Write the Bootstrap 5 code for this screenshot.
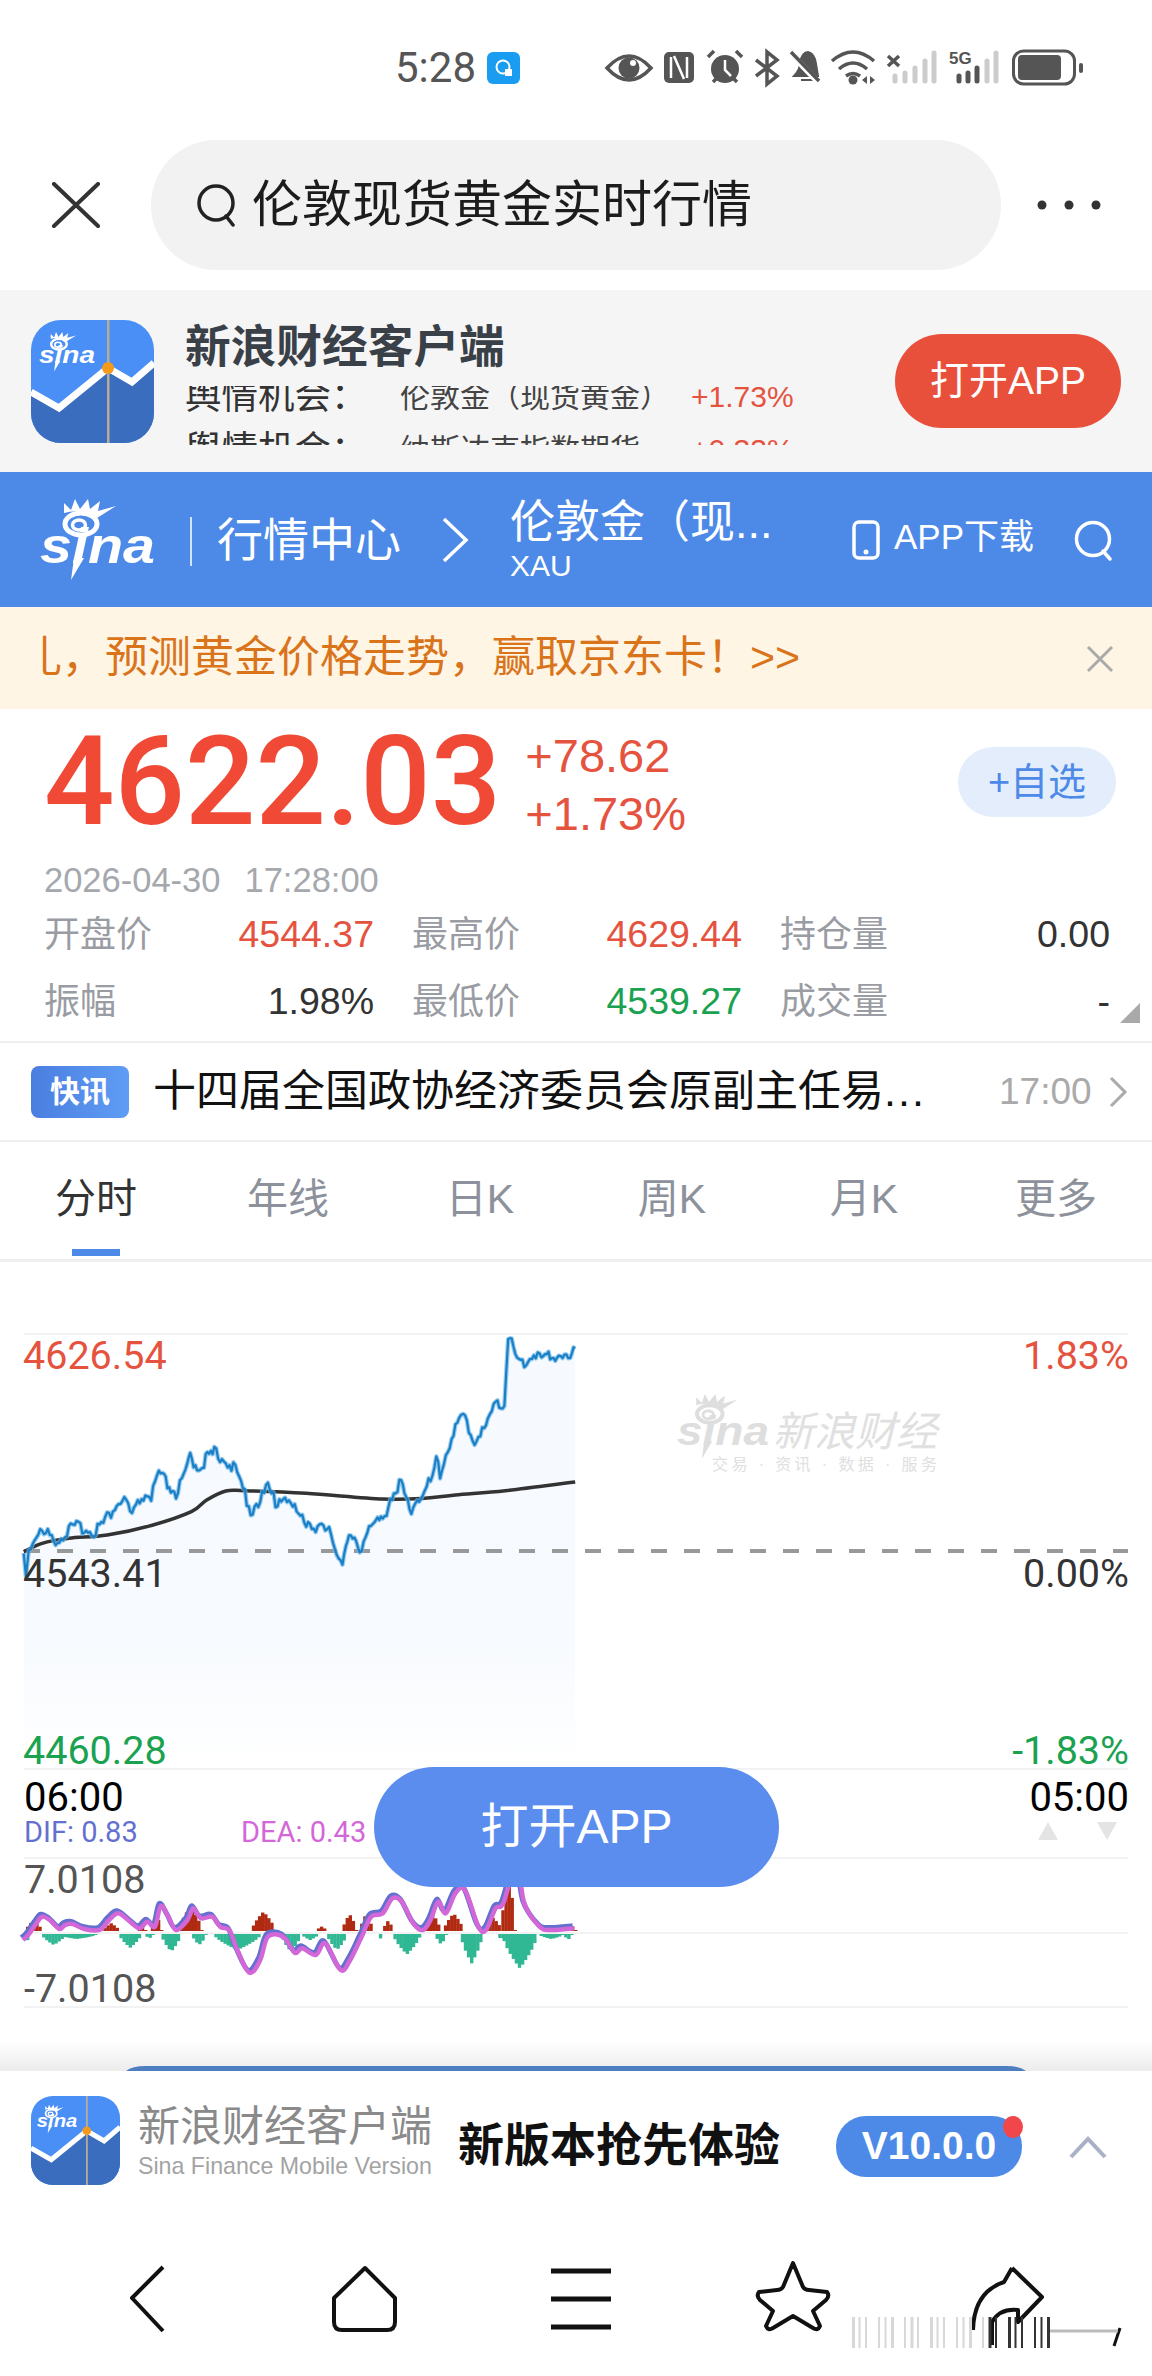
<!DOCTYPE html>
<html lang="zh">
<head>
<meta charset="UTF-8">
<title>伦敦金（现货黄金）</title>
<link href="https://cdn.jsdelivr.net/npm/bootstrap@5.3.0/dist/css/bootstrap.min.css" rel="stylesheet">
<style>
html, body { margin: 0; background: #fff; }
body { width: 1152px; height: 2376px; overflow: hidden; position: relative;
  font-family: "Liberation Sans", "Noto Sans CJK SC", sans-serif; color: #333; }
svg { display: block; }
.nowrap { white-space: nowrap; }

.status-bar { height: 110px; padding-left: 395px; position: relative; }
.status-time { font: 42px/1 Roboto, sans-serif; color: #555; margin-top: 47px; }
.status-app { width: 33px; height: 32px; border-radius: 6px; background: #1a9cf0; margin: 52px 0 0 11px; }
.status-icons { position: absolute; left: 600px; top: 45px; }

.browser-bar { height: 180px; padding: 30px 0 20px 0; }
.browser-close { width: 151px; }
.search-pill { width: 850px; height: 130px; border-radius: 65px; background: #f2f2f2; padding-left: 44px; }
.search-text { font-size: 50px; line-height: 1; color: #1c1c1c; margin-left: 13px; }
.browser-dots { width: 136px; }

.app-banner { height: 182px; background: #f5f5f5; padding-left: 31px; position: relative; }
.app-title { font-size: 45.7px; font-weight: 700; line-height: 1; color: #3a4047; position: absolute; left: 185px; top: 35px; }
.ticker-clip { position: absolute; left: 185px; top: 96px; width: 640px; height: 59px; overflow: hidden; }
.ticker-move { margin-top: -16px; }
.ticker-line { height: 53px; line-height: 53px; white-space: nowrap; display: flex; align-items: center; }
.ticker-tag { font-size: 36.5px; color: #333; width: 215px; }
.ticker-name { font-size: 30px; color: #444; width: 291px; }
.ticker-pct { font-size: 30px; color: #e5533f; }
.open-red { position: absolute; left: 895px; top: 44px; width: 226px; height: 94px; border-radius: 47px;
  background: #e9503c; color: #fff; font-size: 39px; }

.site-header { height: 135px; background: #4d8ae8; color: #fff; position: relative; }
.head-sep { position: absolute; left: 190px; top: 45px; width: 2px; height: 49px; background: rgba(255,255,255,.75); }
.head-title { position: absolute; left: 217px; top: 45px; font-size: 46px; line-height: 1; }
.head-name { position: absolute; left: 510px; top: 28px; font-size: 45px; line-height: 1; white-space: nowrap; }
.head-code { position: absolute; left: 510px; top: 79px; font-size: 30px; line-height: 1; }
.head-down { position: absolute; left: 894px; top: 47px; font-size: 35px; line-height: 1; white-space: nowrap; }

.notice { height: 102px; background: #fef5e5; position: relative; }
.notice-clip { position: absolute; left: 40px; top: 0; width: 900px; height: 102px; overflow: hidden; }
.notice-text { margin-left: -21px; font-size: 43px; line-height: 100px; color: #d9741a; white-space: nowrap; }

.quote { height: 334px; border-bottom: 2px solid #efefef; position: relative; padding: 11px 44px 0 44px; }
.price-row { height: 124px; }
.price-main { font: 500 124px/124px Roboto, sans-serif; color: #f04a36; }
.price-delta { margin-left: 24px; font-size: 47px; line-height: 58px; color: #e5533f; padding-top: 6px; }
.fav-pill { margin-left: auto; margin-right: -8px; width: 158px; height: 70px; border-radius: 35px; background: #e3edfb; color: #4d8ae8; font-size: 38px; }
.quote-time { height: 40px; margin-top: 16px; font-size: 34.5px; line-height: 40px; color: #a5a8ad; }
.quote-clock { margin-left: 24px; }
.stat-grid { display: grid; grid-template-columns: repeat(3, 330px); column-gap: 38px; margin-top: 1px; }
.stat-cell { height: 67px; font-size: 37.5px; }
.stat-label { color: #9a9ca3; font-size: 36px; }
.stat-up { color: #e5533f; }
.stat-down { color: #1aa250; }
.stat-flat { color: #333; }
.stat-more { position: absolute; left: 1120px; top: 294px; width: 0; height: 0; border-left: 20px solid transparent; border-bottom: 20px solid #a9a9a9; }

.flash { height: 99px; border-bottom: 2px solid #efefef; padding-left: 31px; }
.flash-tag { width: 98px; height: 52px; border-radius: 8px; background: linear-gradient(90deg, #4a7ee0, #5f9df5); color: #fff; font-size: 30px; font-weight: 700; }
.flash-text { margin-left: 24px; width: 827px; font-size: 43px; line-height: 1; color: #111; white-space: nowrap; }
.flash-dots { letter-spacing: 2px; }
.flash-time { margin-left: 19px; font-size: 37px; color: #aaa; }

.tabs-row { height: 120px; border-bottom: 3px solid #f0f0f0; }
.tab-item { width: 192px; position: relative; font-size: 41px; line-height: 1; color: #8c919c; padding-top: 37px; text-align: center; }
.tab-item.on { color: #333; }
.tab-item.on::after { content: ""; position: absolute; left: 72px; top: 107px; width: 48px; height: 7px; background: #4d8ae8; }

.chart-area { height: 809px; position: relative; }
.chart-open { position: absolute; left: 374px; top: 505px; width: 405px; height: 120px; border-radius: 60px; background: #5b8dee; color: #fff; font-size: 48px; }

.app-foot { height: 169px; position: relative; background: #fff; }
.foot-icon { position: absolute; left: 31px; top: 25px; }
.foot-name { position: absolute; left: 138px; top: 35px; font-size: 42px; line-height: 1; color: #8a8a8a; white-space: nowrap; }
.foot-en { position: absolute; left: 138px; top: 84px; font-size: 23.2px; line-height: 1; color: #a3a3a3; white-space: nowrap; }
.foot-slogan { position: absolute; left: 458px; top: 51px; font-size: 46px; line-height: 1; font-weight: 700; color: #111; white-space: nowrap; }
.foot-ver { position: absolute; left: 836px; top: 45px; width: 186px; height: 61px; border-radius: 30px; background: #4d8ae8; color: #fff; font-size: 39px; font-weight: 700; }
.foot-dot { position: absolute; left: 1003px; top: 45px; width: 20px; height: 22px; border-radius: 50%; background: #f2474a; }
.foot-up { position: absolute; left: 1068px; top: 65px; }
.browser-nav { height: 136px; }
</style>
</head>
<body>

<svg width="0" height="0" style="position:absolute">
  <defs>
    <symbol id="sinaMark" viewBox="0 0 115 82">
      <ellipse cx="41" cy="26" rx="16" ry="11" fill="none" stroke="currentColor" stroke-width="5"/>
      <ellipse cx="39" cy="27" rx="6.5" ry="5" fill="none" stroke="currentColor" stroke-width="3.5"/>
      <path d="M24 15 L24 5 L31 12 L35 1 L40 11 L48 1 L50 11 L60 3 L58 13 L76 8 L57 20 Q42 10 24 15 Z" fill="currentColor"/>
      <text x="0" y="65" font-family="Liberation Sans" font-weight="700" font-style="italic" font-size="50" textLength="115" lengthAdjust="spacingAndGlyphs" fill="currentColor">sina</text>
      <path d="M34 60 L44 60 L31 82 Z" fill="currentColor"/>
    </symbol>
    <clipPath id="appClip"><rect width="123" height="123" rx="30"/></clipPath>
    <symbol id="appIcon" viewBox="0 0 123 123">
      <g clip-path="url(#appClip)">
        <rect width="123" height="123" fill="#4a8ff5"/>
        <path d="M0 72 L28 88 L77 48 L101 62 L123 43 V123 H0 Z" fill="#3a6dbd"/>
        <path d="M0 72 L28 88 L77 48 L101 62 L123 43" fill="none" stroke="#fff" stroke-width="7"/>
        <rect x="76" width="2.5" height="123" fill="#b8ab97"/>
        <circle cx="77" cy="48" r="6" fill="#f59a1b"/>
        <svg x="8" y="11" width="56" height="41" color="#fff"><use href="#sinaMark"/></svg>
      </g>
    </symbol>
  </defs>
</svg>

<!-- status bar -->
<div class="status-bar d-flex">
  <div class="status-time">5:28</div>
  <div class="status-app d-flex align-items-center justify-content-center">
    <svg width="22" height="22" viewBox="0 0 22 22"><circle cx="10" cy="10" r="6.5" fill="none" stroke="#fff" stroke-width="2"/><rect x="12" y="12" width="7" height="7" fill="#fff"/></svg>
  </div>
  <svg class="status-icons" width="490" height="45" viewBox="600 45 490 45">
    <path d="M607 68 Q629 44 651 68 Q629 92 607 68Z" fill="none" stroke="#555" stroke-width="3.5"/>
    <circle cx="629" cy="68" r="10.5" fill="#555"/><circle cx="633" cy="63" r="3" fill="#fff"/>
    <rect x="664" y="52" width="30" height="31" rx="5" fill="#555"/>
    <path d="M671 57 V78 M687 57 V78 M674 56 L684 79" stroke="#fff" stroke-width="2.5" fill="none"/>
    <circle cx="725" cy="69" r="14" fill="#555"/>
    <path d="M725 60 V70 L731 76" stroke="#fff" stroke-width="2.5" fill="none"/>
    <path d="M708 57 L714 51 M742 57 L736 51 M713 82 L716 79 M737 82 L734 79" stroke="#555" stroke-width="3.5"/>
    <path d="M756 60 L777 76 L767 84 V52 L777 60 L756 76" stroke="#555" stroke-width="3.5" fill="none"/>
    <path d="M794 76 Q800 70 800 63 Q802 52 808 52 Q815 54 816 64 L818 76Z M801 80 H813" fill="#555" stroke="#555" stroke-width="2"/>
    <path d="M790 53 L818 82" stroke="#fff" stroke-width="6"/><path d="M791 52 L819 81" stroke="#555" stroke-width="3.5"/>
    <path d="M832 61 Q853 43 874 61 M839 69 Q853 57 867 69 M846 76 Q853 71 860 76" stroke="#555" stroke-width="3.5" fill="none"/>
    <circle cx="853" cy="80" r="4.5" fill="#555"/>
    <path d="M862 80 L867 76 V84Z M875 80 L870 76 V84Z" fill="#555"/>
    <path d="M888 56 L899 66 M899 56 L888 66" stroke="#555" stroke-width="3.5"/>
    <g stroke="#ccc" stroke-width="5" stroke-linecap="round"><path d="M895 81 V76 M905 81 V73 M915 81 V68 M925 81 V61 M934 81 V53"/></g>
    <text x="949" y="64" font-family="Liberation Sans" font-weight="700" font-size="17" fill="#555">5G</text>
    <g stroke-width="5" stroke-linecap="round"><path d="M959 81 V76 M968 81 V73 M977 81 V68" stroke="#555"/><path d="M987 81 V61 M996 81 V53" stroke="#ccc"/></g>
    <rect x="1013.5" y="51" width="61" height="33" rx="10" fill="none" stroke="#555" stroke-width="3"/>
    <rect x="1018" y="55" width="43" height="25" rx="4" fill="#555"/>
    <rect x="1079" y="63" width="4" height="10" rx="2" fill="#555"/>
  </svg>
</div>

<!-- browser bar -->
<div class="browser-bar d-flex align-items-center">
  <div class="browser-close d-flex justify-content-center">
    <svg width="50" height="46" viewBox="0 0 50 46"><path d="M3 2 L47 44 M47 2 L3 44" stroke="#333" stroke-width="4" stroke-linecap="round"/></svg>
  </div>
  <div class="search-pill d-flex align-items-center">
    <svg width="44" height="44" viewBox="0 0 44 44"><circle cx="21" cy="20" r="17" fill="none" stroke="#222" stroke-width="3.5"/><path d="M31 33 L38 42" stroke="#222" stroke-width="3.5" stroke-linecap="round"/></svg>
    <span class="search-text nowrap">伦敦现货黄金实时行情</span>
  </div>
  <div class="browser-dots d-flex justify-content-center">
    <svg width="66" height="12" viewBox="0 0 66 12"><circle cx="6" cy="6" r="4.5" fill="#333"/><circle cx="33" cy="6" r="4.5" fill="#333"/><circle cx="60" cy="6" r="4.5" fill="#333"/></svg>
  </div>
</div>

<!-- app banner -->
<div class="app-banner">
  <svg width="123" height="123" style="position:absolute;left:31px;top:30px"><use href="#appIcon"/></svg>
  <div class="app-title nowrap">新浪财经客户端</div>
  <div class="ticker-clip">
    <div class="ticker-move">
      <div class="ticker-line"><span class="ticker-tag">舆情机会：</span><span class="ticker-name">伦敦金（现货黄金）</span><span class="ticker-pct">+1.73%</span></div>
      <div class="ticker-line"><span class="ticker-tag">舆情机会：</span><span class="ticker-name">纳斯达克指数期货</span><span class="ticker-pct">+0.33%</span></div>
    </div>
  </div>
  <div class="open-red d-flex align-items-center justify-content-center nowrap">打开APP</div>
</div>

<!-- site header -->
<div class="site-header">
  <svg width="115" height="82" color="#fff" style="position:absolute;left:40px;top:26px"><use href="#sinaMark"/></svg>
  <div class="head-sep"></div>
  <div class="head-title nowrap">行情中心</div>
  <svg width="28" height="46" viewBox="0 0 28 46" style="position:absolute;left:441px;top:45px"><path d="M3 2 L25 23 L3 44" fill="none" stroke="#fff" stroke-width="3.5"/></svg>
  <div class="head-name">伦敦金（现...</div>
  <div class="head-code">XAU</div>
  <svg width="30" height="40" viewBox="0 0 30 40" style="position:absolute;left:851px;top:48px"><rect x="3" y="2" width="24" height="36" rx="5" fill="none" stroke="#fff" stroke-width="3.5"/><circle cx="15" cy="32" r="2.5" fill="#fff"/></svg>
  <div class="head-down">APP下载</div>
  <svg width="42" height="42" viewBox="0 0 42 42" style="position:absolute;left:1073px;top:48px"><circle cx="20" cy="19" r="16.5" fill="none" stroke="#fff" stroke-width="3.5"/><path d="M30 31 L37 39" stroke="#fff" stroke-width="3.5" stroke-linecap="round"/></svg>
</div>

<!-- notice -->
<div class="notice">
  <div class="notice-clip"><div class="notice-text">礼，预测黄金价格走势，赢取京东卡！&gt;&gt;</div></div>
  <svg width="28" height="28" viewBox="0 0 28 28" style="position:absolute;left:1086px;top:38px"><path d="M2 2 L26 26 M26 2 L2 26" stroke="#aaa" stroke-width="3"/></svg>
</div>

<!-- quote -->
<div class="quote">
  <div class="price-row d-flex align-items-center">
    <div class="price-main">4622.03</div>
    <div class="price-delta"><div>+78.62</div><div>+1.73%</div></div>
    <div class="fav-pill d-flex align-items-center justify-content-center">+自选</div>
  </div>
  <div class="quote-time">2026-04-30<span class="quote-clock">17:28:00</span></div>
  <div class="stat-grid">
    <div class="stat-cell d-flex align-items-center justify-content-between"><span class="stat-label">开盘价</span><span class="stat-up">4544.37</span></div>
    <div class="stat-cell d-flex align-items-center justify-content-between"><span class="stat-label">最高价</span><span class="stat-up">4629.44</span></div>
    <div class="stat-cell d-flex align-items-center justify-content-between"><span class="stat-label">持仓量</span><span class="stat-flat">0.00</span></div>
    <div class="stat-cell d-flex align-items-center justify-content-between"><span class="stat-label">振幅</span><span class="stat-flat">1.98%</span></div>
    <div class="stat-cell d-flex align-items-center justify-content-between"><span class="stat-label">最低价</span><span class="stat-down">4539.27</span></div>
    <div class="stat-cell d-flex align-items-center justify-content-between"><span class="stat-label">成交量</span><span class="stat-flat">-</span></div>
  </div>
  <div class="stat-more"></div>
</div>

<!-- flash news -->
<div class="flash d-flex align-items-center">
  <div class="flash-tag d-flex align-items-center justify-content-center">快讯</div>
  <div class="flash-text">十四届全国政协经济委员会原副主任易<span class="flash-dots">...</span></div>
  <div class="flash-time">17:00</div>
  <svg class="ms-3" width="20" height="32" viewBox="0 0 20 32"><path d="M3 2 L17 16 L3 30" fill="none" stroke="#aaa" stroke-width="3"/></svg>
</div>

<!-- tabs -->
<div class="tabs-row d-flex">
  <div class="tab-item on">分时</div>
  <div class="tab-item">年线</div>
  <div class="tab-item">日K</div>
  <div class="tab-item">周K</div>
  <div class="tab-item">月K</div>
  <div class="tab-item">更多</div>
</div>

<!-- chart -->
<div class="chart-area">
  <svg id="chartSvg" width="1152" height="809" viewBox="0 1262 1152 809" font-family="Roboto, sans-serif">
    <defs>
      <linearGradient id="footShade" x1="0" y1="0" x2="0" y2="1"><stop offset="0" stop-color="#fff"/><stop offset="1" stop-color="#ececec"/></linearGradient>
      <linearGradient id="areaShade" x1="0" y1="0" x2="0" y2="1"><stop offset="0" stop-color="#f6fafe"/><stop offset="0.7" stop-color="#f7fafe"/><stop offset="1" stop-color="#ffffff"/></linearGradient>
    </defs>
    <path id="priceArea" fill="url(#areaShade)"/>
    <g stroke="#f2f2f2" stroke-width="2"><path d="M24 1334 H1128 M24 1769 H1128 M24 1858 H1128 M24 1933 H1128 M24 2007 H1128"/></g>
    <path d="M24 1551 H1128" stroke="#999" stroke-width="4" stroke-dasharray="16 17"/>
    <!-- watermark -->
    <svg x="677" y="1393" width="92" height="66" color="#dedede"><use href="#sinaMark"/></svg>
    <text x="773" y="1446" font-family="Liberation Sans, Noto Sans CJK SC, sans-serif" font-style="italic" font-size="41" fill="#e0e0e0">新浪财经</text>
    <text x="712" y="1470" font-family="Liberation Sans, Noto Sans CJK SC, sans-serif" font-size="16" fill="#e0e0e0" textLength="225">交易 · 资讯 · 数据 · 服务</text>
    <path id="avgLine" fill="none" stroke="#333" stroke-width="3.5"/>
    <path id="priceHalo" fill="none" stroke="#6db6e8" stroke-width="4.5" stroke-linejoin="round" opacity=".7"/>
    <path id="priceLine" fill="none" stroke="#1a7fc4" stroke-width="2.2" stroke-linejoin="round"/>
    <g font-size="39.5">
      <text x="23" y="1369" fill="#e5533f">4626.54</text>
      <text x="23" y="1587" fill="#333">4543.41</text>
      <text x="23" y="1764" fill="#1aa250">4460.28</text>
      <text x="1129" y="1369" fill="#e5533f" text-anchor="end">1.83%</text>
      <text x="1129" y="1587" fill="#333" text-anchor="end">0.00%</text>
      <text x="1129" y="1764" fill="#1aa250" text-anchor="end">-1.83%</text>
      <text x="24" y="1811" fill="#000" font-size="40">06:00</text>
      <text x="1129" y="1811" fill="#000" font-size="40" text-anchor="end">05:00</text>
      <text x="24" y="1893" fill="#555">7.0108</text>
      <text x="24" y="2002" fill="#555">-7.0108</text>
    </g>
    <text x="24" y="1842" font-size="29" fill="#6470cf">DIF: 0.83</text>
    <text x="241" y="1842" font-size="29" fill="#d367d8">DEA: 0.43</text>
    <path d="M1038 1840 L1048 1822 L1058 1840Z M1097 1822 L1107 1840 L1117 1822Z" fill="#e4e4e4"/>
    <g id="macdBars"></g>
    <path id="difLine" fill="none" stroke="#6470cf" stroke-width="5" stroke-linejoin="round"/>
    <path id="deaLine" fill="none" stroke="#d367d8" stroke-width="4.5" stroke-linejoin="round"/>
    <rect y="2040" width="1152" height="31" fill="url(#footShade)"/>
    <path d="M126 2071 Q132 2066 146 2066 H1006 Q1020 2066 1026 2071Z" fill="#4d7fc0"/>
  </svg>
  <div class="chart-open d-flex align-items-center justify-content-center nowrap">打开APP</div>
</div>

<!-- app footer -->
<div class="app-foot">
  <svg class="foot-icon" width="89" height="89"><use href="#appIcon"/></svg>
  <div class="foot-name">新浪财经客户端</div>
  <div class="foot-en">Sina Finance Mobile Version</div>
  <div class="foot-slogan">新版本抢先体验</div>
  <div class="foot-ver d-flex align-items-center justify-content-center">V10.0.0</div>
  <div class="foot-dot"></div>
  <svg class="foot-up" width="40" height="24" viewBox="0 0 40 24"><path d="M3 21 L20 3 L37 21" fill="none" stroke="#aab0c8" stroke-width="4"/></svg>
</div>

<!-- browser nav -->
<div class="browser-nav">
  <svg width="1152" height="136" viewBox="0 2240 1152 136" fill="none" stroke="#111" stroke-width="4" stroke-linejoin="round">
    <path d="M163 2267 L132 2298 L163 2331"/>
    <path d="M365 2268 L395 2298 V2322 Q395 2330 387 2330 H342 Q334 2330 334 2322 V2298 Z"/>
    <path d="M551 2271 H611 M551 2299 H611 M551 2327 H611" stroke-width="5"/>
    <path d="M793 2263 L803 2287 Q805 2290 809 2290 L827 2292 Q830 2296 826 2300 L813 2311 L820 2326 Q818 2331 813 2328 L793 2316 L773 2328 Q768 2331 766 2326 L773 2311 L760 2300 Q756 2296 759 2292 L777 2290 Q781 2290 783 2287 Z"/>
    <path d="M1012 2268 L1004 2282 Q974 2292 973 2330 M1012 2268 L1042 2297 L1018 2322 V2310 Q1000 2308 992 2322 V2345"/>
    <path d="M1120 2328 L1114 2346" stroke-width="3"/>
    <path d="M1050 2331 H1118" stroke="#bbb" stroke-width="3"/>
    <g stroke-width="0" fill="#111">
      <g id="navStreaks"></g>
    </g>
  </svg>
</div>

<script>
  // pontos lidos da imagem
  const Z = (p) => p.map(([x, y]) => [x / 2.613, 1320 + y / 3]);
  const M = (p) => p.map(([x, y]) => [x / 2.613, 1780 + y / 3]);

  function serie(pts, step, jit) {
    const out = [];
    let k = 0;
    for (let i = 0; i < pts.length - 1; i++) {
      const [x0, y0] = pts[i], [x1, y1] = pts[i + 1];
      const n = Math.max(1, Math.round((x1 - x0) / step));
      for (let j = 0; j < n; j++) {
        const t = j / n;
        const r = jit ? (Math.sin(k * 12.9898) * 43758.5453) % 1 : 0;
        out.push([x0 + (x1 - x0) * t, y0 + (y1 - y0) * t + r * jit]);
        k++;
      }
    }
    out.push(pts[pts.length - 1]);
    return out;
  }
  const toD = (pts) => 'M' + pts.map(([x, y]) => x.toFixed(1) + ' ' + y.toFixed(1)).join(' L');

  // curva suave entre os pontos
  function suave(p) {
    let d = 'M' + p[0][0].toFixed(1) + ' ' + p[0][1].toFixed(1);
    for (let i = 0; i < p.length - 1; i++) {
      const a = p[Math.max(0, i - 1)], b = p[i], c = p[i + 1], e = p[Math.min(p.length - 1, i + 2)];
      d += ' C' + (b[0] + (c[0] - a[0]) / 6).toFixed(1) + ' ' + (b[1] + (c[1] - a[1]) / 6).toFixed(1)
        + ' ' + (c[0] - (e[0] - b[0]) / 6).toFixed(1) + ' ' + (c[1] - (e[1] - b[1]) / 6).toFixed(1)
        + ' ' + c[0].toFixed(1) + ' ' + c[1].toFixed(1);
    }
    return d;
  }

  const price = Z([[62,700],[68,750],[75,690],[95,640],[130,645],[150,660],[180,630],[215,620],[240,635],[270,610],[300,560],[325,535],[345,590],[375,525],[395,530],[415,465],[460,520],[480,480],[497,410],[515,440],[560,400],[590,415],[615,455],[640,520],[655,570],[680,540],[700,500],[720,550],[740,520],[775,580],[810,610],[830,620],[860,640],[880,690],[895,720],[912,650],[940,690],[960,620],[1000,605],[1020,530],[1048,490],[1070,570],[1100,520],[1130,480],[1140,420],[1150,460],[1185,330],[1210,290],[1240,360],[1265,330],[1300,240],[1318,250],[1328,50],[1360,140],[1395,100],[1420,120],[1460,100],[1490,120],[1503,85]]);
  const priceJ = serie(price, 1.8, 7);
  document.getElementById('priceLine').setAttribute('d', toD(priceJ));
  document.getElementById('priceHalo').setAttribute('d', toD(priceJ));
  document.getElementById('priceArea').setAttribute('d', toD(priceJ) + ' L575 1769 L24 1769 Z');

  const avg = Z([[62,695],[110,670],[180,655],[280,645],[400,615],[500,575],[540,540],[590,513],[640,512],[800,520],[1000,537],[1110,535],[1190,525],[1320,512],[1503,486]]);
  document.getElementById('avgLine').setAttribute('d', suave(avg));

  const deaPts = [[60,480],[70,470],[78,458],[95,430],[110,410],[130,420],[155,447],[170,435],[190,432],[220,447],[260,450],[285,420],[310,400],[345,430],[365,445],[385,425],[405,440],[420,378],[440,410],[460,450],[490,420],[505,385],[525,415],[555,410],[575,440],[600,452],[620,510],[652,578],[680,540],[700,470],[740,470],[770,518],[790,505],[825,525],[850,490],[890,570],[915,540],[945,470],[970,410],[1000,400],[1025,355],[1050,365],[1080,430],[1105,450],[1125,420],[1145,365],[1165,400],[1190,340],[1215,330],[1250,440],[1270,450],[1295,385],[1315,370],[1350,250],[1370,370],[1410,440],[1440,450],[1500,445]];
  const macd = M(deaPts);
  document.getElementById('deaLine').setAttribute('d', suave(macd));
  document.getElementById('difLine').setAttribute('d', suave(macd.map(([x, y]) => [x - 1.5, y - 2.5])));

  // histograma: centro, meia largura, pico
  const red = [[88,20,30],[290,20,20],[370,10,15],[408,14,45],[497,30,70],[688,30,55],[840,12,10],[913,18,48],[957,16,50],[1014,13,28],[1130,20,50],[1185,25,50],[1285,25,40],[1328,18,170],[1498,6,15]];
  const green = [[68,8,25],[140,30,30],[200,50,12],[340,28,38],[390,10,10],[447,25,50],[520,18,30],[620,60,45],[760,25,50],[810,20,15],[880,25,45],[995,5,12],[1063,35,58],[1152,14,28],[1232,28,85],[1310,8,15],[1358,45,100],[1440,30,12],[1484,10,14]];
  const ns = 'http://www.w3.org/2000/svg';
  const bars = document.getElementById('macdBars');
  function hump(list, color, up) {
    list.forEach(([c, hw, pk]) => {
      const w = 8;
      for (let x = c - hw; x <= c + hw - w / 2; x += w) {
        const d = Math.abs(x + w / 2 - c) / hw;
        const h = pk * Math.pow(Math.max(0, 1 - d), 0.7) / 3 + 1;
        const r = document.createElementNS(ns, 'rect');
        r.setAttribute('x', (x / 2.613).toFixed(1));
        r.setAttribute('width', (w / 2.613 + 0.3).toFixed(1));
        r.setAttribute('y', up ? 1931 - h : 1934);
        r.setAttribute('height', h);
        r.setAttribute('fill', color);
        bars.appendChild(r);
      }
    });
  }
  hump(red, '#b02a12', true);
  hump(green, '#2fb893', false);

  // marca d'agua no canto inferior
  const marks = document.getElementById('navStreaks');
  for (let i = 0; i < 31; i++) {
    const x = 852 + i * 6.5;
    const r = document.createElementNS(ns, 'rect');
    const dark = x > 988;
    r.setAttribute('x', x);
    r.setAttribute('y', 2317);
    r.setAttribute('width', i % 3 === 0 ? 3 : 2);
    r.setAttribute('height', 31);
    r.setAttribute('fill', dark ? '#333' : '#d8d8d8');
    r.setAttribute('opacity', i % 4 === 3 ? 0 : 1);
    marks.appendChild(r);
  }
</script>
<script src="https://cdn.jsdelivr.net/npm/bootstrap@5.3.0/dist/js/bootstrap.bundle.min.js"></script>
</body>
</html>
